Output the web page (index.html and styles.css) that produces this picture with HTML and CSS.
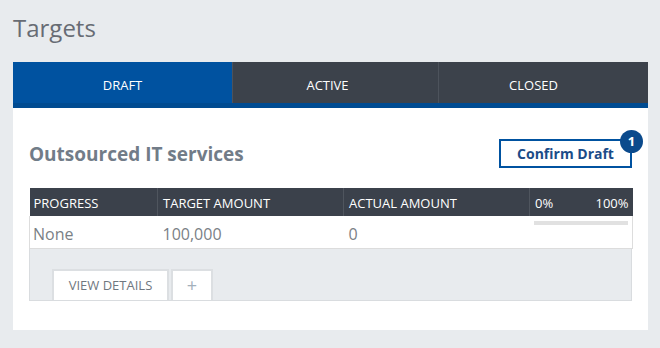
FILE: index.html
```html
<!DOCTYPE html>
<html>
    <head>
        <title>Targets</title>
        <meta charset="utf-8" />
        <link rel="stylesheet" href="styles.css">
    </head>
    <body>
        <h1 class="page-title">Targets</h1>
        <article class="panel">
            <nav class="tabs">
                <div class="tab active">DRAFT</div>
                <div class="tab">ACTIVE</div>
                <div class="tab">CLOSED</div>
            </nav>
            <section class="panel-body">
                <div class="panel-head">
                    <h2>Outsourced IT services</h2>
                    <button class="confirm">Confirm Draft<span class="badge">1</span></button>
                </div>
                <table class="targets">
                    <colgroup>
                        <col class="c1"><col class="c2"><col class="c3"><col class="c4">
                    </colgroup>
                    <thead>
                        <tr>
                            <th>PROGRESS</th>
                            <th>TARGET AMOUNT</th>
                            <th>ACTUAL AMOUNT</th>
                            <th class="scale"><span>0%</span><span>100%</span></th>
                        </tr>
                    </thead>
                    <tbody>
                        <tr>
                            <td>None</td>
                            <td>100,000</td>
                            <td>0</td>
                            <td class="bar-cell"><div class="bar"></div></td>
                        </tr>
                    </tbody>
                </table>
                <div class="table-foot">
                    <button class="foot-btn details">VIEW DETAILS</button>
                    <button class="foot-btn plus">+</button>
                </div>
            </section>
        </article>
    </body>
</html>
```

FILE: styles.css
```css
* {
    font-family: "Open Sans", "Noto Sans", sans-serif;
    box-sizing: border-box;
    margin: 0;
    padding: 0;
}
body {
    background-color: #e8ebee;
    padding: 0 12px 0 13px;
    height: 348px;
}
.page-title {
    font-size: 24px;
    font-weight: 400;
    color: #676c74;
    line-height: 30px;
    padding-top: 13px;
    margin-bottom: 19px;
}
.panel {
    background-color: #fff;
}
.tabs {
    display: grid;
    grid-template-columns: 219px 206px 1fr;
    height: 46px;
    background-color: #3c424b;
    border-bottom: 5px solid #004b91;
}
.tab {
    display: flex;
    align-items: center;
    justify-content: center;
    padding-top: 5px;
    color: #fff;
    font-size: 13px;
    border-left: 1px solid #4d535c;
}
.tab:nth-child(2) {
    padding-right: 16px;
}
.tab:nth-child(3) {
    padding-right: 20px;
}
.tab.active {
    background-color: #0052a0;
    border-left: 0;
}
.panel-body {
    padding: 31px 16px 29px;
}
.panel-head {
    display: flex;
    justify-content: space-between;
    align-items: center;
    margin-bottom: 20px;
}
h2 {
    font-size: 19px;
    font-weight: 700;
    color: #717c88;
}
.confirm {
    position: relative;
    width: 133px;
    height: 29px;
    background: #fff;
    border: 2px solid #0052a0;
    color: #1b4c88;
    font-size: 14px;
    font-weight: 700;
}
.badge {
    position: absolute;
    top: -11px;
    right: -13px;
    width: 23px;
    height: 23px;
    border-radius: 12px;
    background-color: #0b4a8c;
    color: #fff;
    font-size: 13px;
    font-weight: 700;
    line-height: 23px;
    text-align: center;
}
.targets {
    width: 603px;
    border-collapse: collapse;
    table-layout: fixed;
}
.c1 { width: 128px; }
.c2 { width: 186px; }
.c3 { width: 186px; }
.c4 { width: 103px; }
th {
    height: 28px;
    background-color: #3b414b;
    color: #fff;
    font-size: 13px;
    font-weight: 400;
    text-align: left;
    padding: 2px 5px 0;
    border-left: 1px solid #4f555e;
}
th:first-child {
    border-left: 0;
    padding-left: 4px;
}
th.scale {
    padding-right: 4px;
}
th.scale span:last-child {
    float: right;
}
td {
    height: 32px;
    color: #7a7f86;
    font-size: 16px;
    padding: 4px 5px 0;
    border-bottom: 1px solid #dcdcdc;
}
td:first-child {
    border-left: 1px solid #dddddd;
    padding-left: 3px;
}
td:last-child {
    border-right: 1px solid #dddddd;
}
td.bar-cell {
    vertical-align: top;
    padding: 5px 4px 0;
}
.bar {
    height: 4px;
    background-color: #e1e1e1;
}
.table-foot {
    display: flex;
    gap: 2px;
    height: 52px;
    padding: 20px 0 0 22px;
    background-color: #e8ebee;
    border: 1px solid #d9dcdf;
    border-top: 0;
}
.foot-btn {
    height: 31px;
    background: #fff;
    border: 2px solid #dcdfe2;
    border-bottom: 0;
    color: #6f7780;
    font-size: 13px;
}
.details {
    width: 117px;
}
.plus {
    width: 42px;
    color: #a3b0bb;
    font-size: 18px;
}
```
